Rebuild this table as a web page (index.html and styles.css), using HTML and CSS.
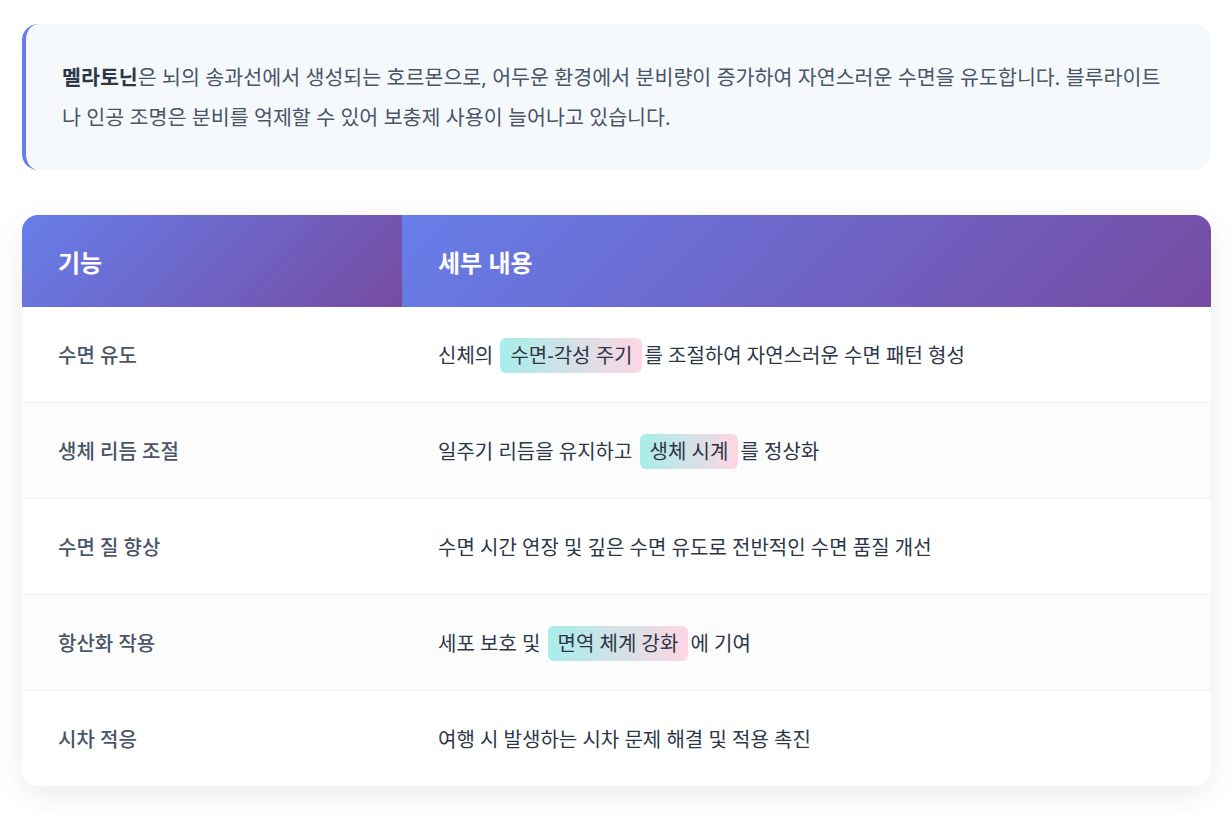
FILE: index.html
```html
<!DOCTYPE html>
<html lang="ko">
<head>
  <meta charset="UTF-8">
  <meta name="viewport" content="width=device-width, initial-scale=1.0">
  <title>멜라토닌 기능</title>
  <link rel="stylesheet" href="styles.css">
</head>
<body>
  <div class="container">
    <div class="intro">
      <p><strong>멜라토닌</strong>은 뇌의 송과선에서 생성되는 호르몬으로, 어두운 환경에서 분비량이 증가하여 자연스러운 수면을 유도합니다. 블루라이트나 인공 조명은 분비를 억제할 수 있어 보충제 사용이 늘어나고 있습니다.</p>
    </div>

    <div class="table-wrap">
      <table class="feature-table">
        <thead>
          <tr>
            <th class="col-name">기능</th>
            <th>세부 내용</th>
          </tr>
        </thead>
        <tbody>
          <tr>
            <td class="col-name">수면 유도</td>
            <td>신체의 <span class="highlight">수면-각성 주기</span>를 조절하여 자연스러운 수면 패턴 형성</td>
          </tr>
          <tr>
            <td class="col-name">생체 리듬 조절</td>
            <td>일주기 리듬을 유지하고 <span class="highlight">생체 시계</span>를 정상화</td>
          </tr>
          <tr>
            <td class="col-name">수면 질 향상</td>
            <td>수면 시간 연장 및 깊은 수면 유도로 전반적인 수면 품질 개선</td>
          </tr>
          <tr>
            <td class="col-name">항산화 작용</td>
            <td>세포 보호 및 <span class="highlight">면역 체계 강화</span>에 기여</td>
          </tr>
          <tr>
            <td class="col-name">시차 적응</td>
            <td>여행 시 발생하는 시차 문제 해결 및 적용 촉진</td>
          </tr>
        </tbody>
      </table>
    </div>
  </div>
</body>
</html>
```

FILE: styles.css
```css
body {
  font-family: "Noto Sans", "Noto Sans CJK KR", sans-serif;
  background-color: #ffffff;
  color: #2d3748;
  margin: 0;
  padding: 0;
}
.container {
  padding: 24px 21px 40px 22px;
}
.intro {
  background: #f6f9fc;
  border-left: 4px solid #667eea;
  border-radius: 16px;
  padding: 33px 36px 33px 36px;
}
.intro p {
  margin: 0;
  font-size: 20.6px;
  line-height: 40px;
  color: #4a5568;
}
.intro strong {
  color: #2d3748;
  font-weight: 700;
}
.table-wrap {
  margin-top: 45px;
  border-radius: 16px;
  overflow: hidden;
  background: white;
  box-shadow: 0 8px 30px rgba(0, 0, 0, 0.08);
}
.feature-table {
  width: 100%;
  border-collapse: collapse;
}
.feature-table th {
  height: 92px;
  padding: 0 36px;
  text-align: left;
  font-size: 24px;
  font-weight: 700;
  color: white;
  background: linear-gradient(135deg, #667eea 0%, #764ba2 100%);
}
.feature-table th.col-name {
  width: 308px;
}
.feature-table td {
  height: 95px;
  padding: 0 36px;
  font-size: 20px;
  color: #2d3748;
  border-bottom: 1px solid #edf0f3;
}
.feature-table tbody tr:nth-child(even) td {
  background: #fcfcfd;
}
.feature-table tbody tr:last-child td {
  border-bottom: none;
}
.feature-table td.col-name {
  color: #4a5568;
  font-weight: 500;
}
.highlight {
  background: linear-gradient(90deg, #a8edea 0%, #fed6e3 100%);
  border-radius: 6px;
  padding: 4px 10px;
  margin: 0 2px;
}
```
